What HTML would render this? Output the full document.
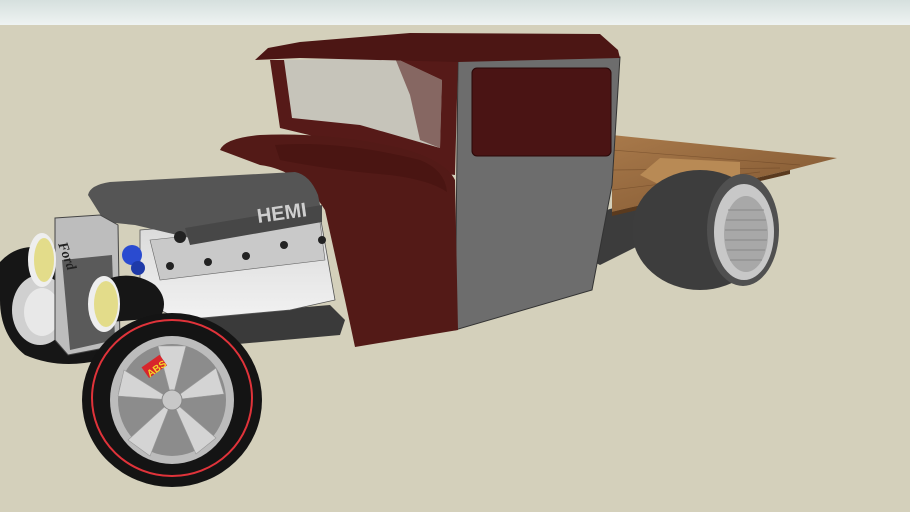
<!DOCTYPE html>
<html><head><meta charset="utf-8"><style>
html,body{margin:0;padding:0;width:910px;height:512px;overflow:hidden;background:#d4d0bb}
svg{display:block}
</style></head><body>
<svg width="910" height="512" viewBox="0 0 910 512" xmlns="http://www.w3.org/2000/svg">
<defs>
<linearGradient id="sky" x1="0" y1="0" x2="0" y2="1"><stop offset="0" stop-color="#d5e0de"/><stop offset="1" stop-color="#eef3f2"/></linearGradient>
<linearGradient id="wood" x1="0" y1="0" x2="1" y2="1"><stop offset="0" stop-color="#a8794a"/><stop offset="1" stop-color="#7e5530"/></linearGradient>
<linearGradient id="eng" x1="0" y1="0" x2="0" y2="1"><stop offset="0" stop-color="#d8d8d8"/><stop offset="1" stop-color="#f2f2f2"/></linearGradient>
</defs>
<rect x="0" y="0" width="910" height="25" fill="url(#sky)"/>
<rect x="0" y="25" width="910" height="487" fill="#d4d0bb"/>
<polygon points="590,215 640,200 650,240 600,265 590,260" fill="#3c3c3c"/>
<polygon points="612,135 837,158 790,170 612,212" fill="url(#wood)"/>
<polygon points="612,212 790,170 790,174 612,216" fill="#5a3a1e"/>
<g stroke="#6b4525" stroke-width="0.7" opacity="0.6">
<line x1="612" y1="150" x2="800" y2="165"/><line x1="612" y1="170" x2="780" y2="168"/><line x1="612" y1="190" x2="760" y2="172"/>
</g>
<polygon points="640,175 660,158 740,162 740,195 700,205" fill="#b88a55"/>
<ellipse cx="700" cy="230" rx="68" ry="60" fill="#3d3d3d"/>
<ellipse cx="743" cy="230" rx="36" ry="56" fill="#505050"/>
<ellipse cx="744" cy="232" rx="30" ry="48" fill="#c8c8c8"/>
<ellipse cx="746" cy="234" rx="22" ry="38" fill="#a8a8a8"/>
<g stroke="#888" stroke-width="1">
<line x1="728" y1="210" x2="764" y2="210"/><line x1="726" y1="220" x2="766" y2="220"/><line x1="725" y1="230" x2="767" y2="230"/><line x1="725" y1="240" x2="767" y2="240"/><line x1="727" y1="250" x2="765" y2="250"/><line x1="730" y1="260" x2="762" y2="260"/>
</g>
<polygon points="458,60 620,57 612,185 592,290 455,330" fill="#6d6d6d" stroke="#333" stroke-width="1"/>
<rect x="472" y="68" width="139" height="88" rx="5" fill="#4a1414" stroke="#2a0808"/>
<polygon points="270,60 458,60 455,175 400,168 330,140 280,128" fill="#561a18"/>
<polygon points="284,60 395,58 442,80 440,148 360,125 292,118" fill="#c6c4ba"/>
<polygon points="395,58 442,80 440,148 420,140 410,95" fill="#5c2a28" opacity="0.6"/>
<polygon points="255,60 268,48 300,42 410,33 600,34 618,50 620,58 458,62 300,58" fill="#4c1614"/>
<path d="M220,150 Q225,138 260,135 Q330,132 400,148 Q445,160 455,180 L458,330 L355,347 L345,300 L325,210 Q300,170 260,165 Z" fill="#531a17"/>
<path d="M275,145 Q340,140 420,160 Q445,170 447,192 Q430,180 390,175 Q330,170 280,160 Z" fill="#4a1512"/>
<polygon points="150,320 330,305 345,320 340,335 170,350" fill="#3a3a3a"/>
<polygon points="140,230 320,215 335,300 290,310 180,320 140,300" fill="url(#eng)" stroke="#555" stroke-width="0.8"/>
<polygon points="150,240 320,222 325,260 160,280" fill="#c9c9c9" stroke="#666" stroke-width="0.6"/>
<path d="M88,195 Q90,185 110,182 L295,172 Q310,175 318,195 L322,215 L190,238 L135,225 L105,222 Z" fill="#555"/>
<polygon points="185,228 322,205 322,222 190,245" fill="#474747"/>
<text x="258" y="223" font-family="Liberation Sans, sans-serif" font-size="20" font-weight="bold" fill="#cfcfcf" transform="rotate(-8 258 223)">HEMI</text>
<g fill="#222">
<circle cx="180" cy="237" r="6"/><circle cx="170" cy="266" r="4"/><circle cx="208" cy="262" r="4"/><circle cx="246" cy="256" r="4"/><circle cx="284" cy="245" r="4"/><circle cx="322" cy="240" r="4"/>
</g>
<circle cx="132" cy="255" r="10" fill="#2a4bd0"/>
<circle cx="138" cy="268" r="7" fill="#1f3aa8"/>
<path d="M0,262 Q20,240 55,250 L95,300 L100,360 Q60,370 25,355 Q0,335 0,300 Z" fill="#161616"/>
<ellipse cx="40" cy="310" rx="28" ry="35" fill="#d0d0d0"/>
<ellipse cx="42" cy="312" rx="18" ry="24" fill="#e8e8e8"/>
<polygon points="55,218 100,215 118,225 120,345 68,355 55,340" fill="#bdbdbd" stroke="#444" stroke-width="1"/>
<polygon points="62,260 112,255 115,340 70,350" fill="#5a5a5a"/>
<text x="58" y="244" font-family="Liberation Serif, serif" font-style="italic" font-weight="bold" font-size="14" fill="#222" transform="rotate(70 58 244)">Ford</text>
<ellipse cx="42" cy="260" rx="14" ry="27" fill="#eee"/>
<ellipse cx="44" cy="260" rx="10" ry="22" fill="#e3dc8a"/>
<path d="M100,282 Q130,268 155,285 Q170,300 160,318 L110,322 Z" fill="#161616"/>
<ellipse cx="104" cy="304" rx="16" ry="28" fill="#eee"/>
<ellipse cx="106" cy="304" rx="12" ry="23" fill="#e3dc8a"/>
<ellipse cx="172" cy="400" rx="90" ry="87" fill="#141414"/>
<ellipse cx="172" cy="398" rx="80" ry="78" fill="none" stroke="#e0333a" stroke-width="2"/>
<ellipse cx="172" cy="400" rx="62" ry="64" fill="#bcbcbc"/>
<ellipse cx="172" cy="400" rx="54" ry="56" fill="#8c8c8c"/>
<g fill="#d4d4d4" stroke="#999" stroke-width="0.6">
<polygon points="172,400 158,346 186,346"/>
<polygon points="172,400 216,368 224,394"/>
<polygon points="172,400 216,438 196,454"/>
<polygon points="172,400 150,456 128,440"/>
<polygon points="172,400 118,396 124,370"/>
</g>
<circle cx="172" cy="400" r="10" fill="#c8c8c8" stroke="#888"/>
<rect x="143" y="360" width="22" height="13" fill="#d8262c" transform="rotate(-35 154 366)"/>
<text x="144" y="373" font-family="Liberation Sans, sans-serif" font-size="10" font-weight="bold" fill="#f3d52a" transform="rotate(-35 154 366)">ABS</text>
</svg>
</body></html>
